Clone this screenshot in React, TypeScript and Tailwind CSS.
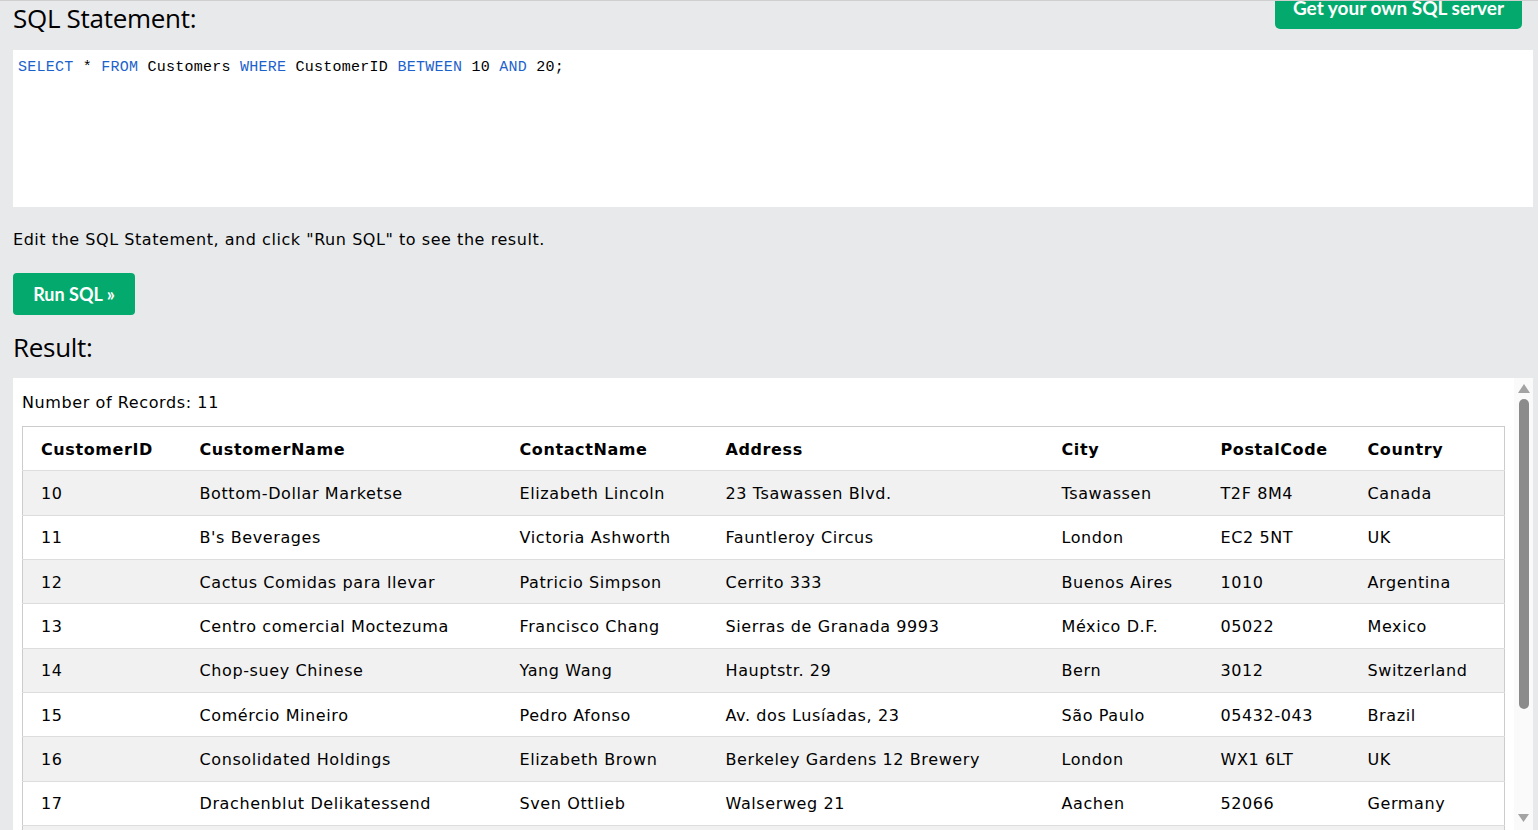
import React from 'react';

const rows = [
  ['10', 'Bottom-Dollar Marketse', 'Elizabeth Lincoln', '23 Tsawassen Blvd.', 'Tsawassen', 'T2F 8M4', 'Canada'],
  ['11', "B's Beverages", 'Victoria Ashworth', 'Fauntleroy Circus', 'London', 'EC2 5NT', 'UK'],
  ['12', 'Cactus Comidas para llevar', 'Patricio Simpson', 'Cerrito 333', 'Buenos Aires', '1010', 'Argentina'],
  ['13', 'Centro comercial Moctezuma', 'Francisco Chang', 'Sierras de Granada 9993', 'México D.F.', '05022', 'Mexico'],
  ['14', 'Chop-suey Chinese', 'Yang Wang', 'Hauptstr. 29', 'Bern', '3012', 'Switzerland'],
  ['15', 'Comércio Mineiro', 'Pedro Afonso', 'Av. dos Lusíadas, 23', 'São Paulo', '05432-043', 'Brazil'],
  ['16', 'Consolidated Holdings', 'Elizabeth Brown', 'Berkeley Gardens 12 Brewery', 'London', 'WX1 6LT', 'UK'],
  ['17', 'Drachenblut Delikatessend', 'Sven Ottlieb', 'Walserweg 21', 'Aachen', '52066', 'Germany'],
  ['18', 'Du monde entier', 'Janine Labrune', '67, rue des Cinquante Otages', 'Nantes', '44000', 'France'],
  ['19', 'Eastern Connection', 'Ann Devon', '35 King George', 'London', 'WX3 6FW', 'UK'],
  ['20', 'Ernst Handel', 'Roland Mendel', 'Kirchgasse 6', 'Graz', '8010', 'Austria'],
];

const headers = ['CustomerID', 'CustomerName', 'ContactName', 'Address', 'City', 'PostalCode', 'Country'];
const widths = ['w-[159px]', 'w-[320px]', 'w-[206px]', 'w-[336px]', 'w-[159px]', 'w-[147px]', 'w-[155px]'];

const Kw = ({ children }: { children: React.ReactNode }) => (
  <span className="text-[#1c62cc]">{children}</span>
);

export default function App() {
  return (
    <div className="h-[830px] overflow-hidden bg-[#e7e9eb] border-t border-[#cfcfcf] pl-[13px] pr-[5px] text-black font-['DejaVu_Sans',sans-serif]">
      {/* header */}
      <div className="flex justify-between items-start h-[49px]">
        <h2 className="mt-0 text-[26px] leading-[34px] font-['Open_Sans',sans-serif] tracking-[-0.3px]">SQL Statement:</h2>
        <button className="-mt-[15px] mr-[11px] w-[247px] h-[43px] rounded-[5px] bg-[#04aa6d] text-white font-['Lato',sans-serif] font-bold text-[19px] leading-[43px] text-center">
          Get your own SQL server
        </button>
      </div>

      {/* code editor */}
      <div className="h-[157px] bg-white pl-[5px] pt-[8px] font-['Liberation_Mono',monospace] text-[15px] tracking-[0.25px] leading-[20px] whitespace-pre">
        <Kw>SELECT</Kw> * <Kw>FROM</Kw> Customers <Kw>WHERE</Kw> CustomerID <Kw>BETWEEN</Kw> 10 <Kw>AND</Kw> 20;
      </div>

      <p className="mt-[22px] h-[22px] text-[16px] leading-[22px] tracking-[0.55px] font-['DejaVu_Sans',sans-serif]">
        Edit the SQL Statement, and click "Run SQL" to see the result.
      </p>

      <button className="mt-[22px] w-[122px] h-[42px] rounded-[4px] bg-[#04aa6d] text-white font-['Lato',sans-serif] font-bold text-[18px]">
        Run SQL »
      </button>

      <h2 className="mt-[15px] h-[34px] text-[26px] leading-[34px] font-['Open_Sans',sans-serif] tracking-[-0.3px]">Result:</h2>

      {/* result panel */}
      <div className="mt-[14px] h-[452px] bg-white flex">
        <div className="flex-1 overflow-hidden pl-[9px] pr-[9px] text-[16px] tracking-[0.6px]">
          <div className="h-[48px] pt-[14px] leading-[22px]">Number of Records: 11</div>
          <table className="border-collapse border border-[#cccccc] table-fixed w-[1482px]">
            <thead>
              <tr className="h-[44.33px] border-b border-[#dddddd]">
                {headers.map((h, i) => (
                  <th key={h} className={`${widths[i]} text-left font-bold pl-[18px] pt-[2px]`}>{h}</th>
                ))}
              </tr>
            </thead>
            <tbody>
              {rows.map((r, ri) => (
                <tr key={r[0]} className={`h-[44.33px] border-b border-[#dddddd] ${ri % 2 === 0 ? 'bg-[#f1f1f1]' : 'bg-white'}`}>
                  {r.map((c, ci) => (
                    <td key={ci} className="pl-[18px] pt-[2px] whitespace-nowrap">{c}</td>
                  ))}
                </tr>
              ))}
            </tbody>
          </table>
        </div>
        {/* scrollbar */}
        <div className="w-[19px] bg-[#fafafa] flex flex-col items-center">
          <svg width="12" height="9" viewBox="0 0 12 9" className="mt-[6px]">
            <path d="M6 0 L12 9 L0 9 Z" fill="#a3a3a3" />
          </svg>
          <div className="mt-[6px] w-[10px] h-[310px] rounded-full bg-[#8b8b8b]" />
          <div className="flex-1" />
          <svg width="11" height="8" viewBox="0 0 11 8" className="mb-[8px]">
            <path d="M0 0 L11 0 L5.5 8 Z" fill="#a3a3a3" />
          </svg>
        </div>
      </div>
    </div>
  );
}
